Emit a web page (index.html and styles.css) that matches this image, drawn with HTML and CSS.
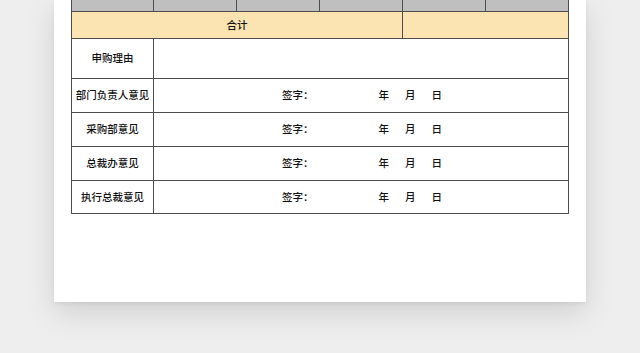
FILE: index.html
```html
<!DOCTYPE html>
<html lang="zh-CN">
<head>
  <meta charset="UTF-8" />
  <meta name="viewport" content="width=device-width, initial-scale=1" />
  <title>采购申请单</title>
  <link rel="stylesheet" href="styles.css">
</head>
<body>
  <div class="sheet">
    <table class="form">
      <colgroup>
        <col class="first"><col><col><col><col><col>
      </colgroup>
      <tr class="head-row">
        <td></td><td></td><td></td><td></td><td></td><td></td>
      </tr>
      <tr class="total-row">
        <td colspan="4">合计</td>
        <td colspan="2"></td>
      </tr>
      <tr class="reason-row">
        <td class="label">申购理由</td>
        <td colspan="5"></td>
      </tr>
      <tr class="sign-row">
        <td class="label">部门负责人意见</td>
        <td colspan="5" class="sign"><span class="sig">签字：</span><span class="y">年</span><span class="m">月</span><span class="d">日</span></td>
      </tr>
      <tr class="sign-row">
        <td class="label">采购部意见</td>
        <td colspan="5" class="sign"><span class="sig">签字：</span><span class="y">年</span><span class="m">月</span><span class="d">日</span></td>
      </tr>
      <tr class="sign-row">
        <td class="label">总裁办意见</td>
        <td colspan="5" class="sign"><span class="sig">签字：</span><span class="y">年</span><span class="m">月</span><span class="d">日</span></td>
      </tr>
      <tr class="sign-row last">
        <td class="label">执行总裁意见</td>
        <td colspan="5" class="sign"><span class="sig">签字：</span><span class="y">年</span><span class="m">月</span><span class="d">日</span></td>
      </tr>
    </table>
  </div>
</body>
</html>
```

FILE: styles.css
```css
html, body {
  margin: 0;
  height: 100%;
  overflow: hidden;
}
body {
  background: #eeeeee;
  font-family: "Noto Sans CJK SC", "Noto Sans", sans-serif;
  color: #111;
}
.sheet {
  width: 497px;
  margin-left: 54px;
  padding: 0 18px 88px 17px;
  background: #fff;
  box-shadow: 0 10px 28px rgba(0, 0, 0, 0.13), 0 2px 4px rgba(0, 0, 0, 0.06);
}
.form {
  width: 497px;
  border-collapse: collapse;
  table-layout: fixed;
  font-size: 10.5px;
  font-weight: 500;
}
.form col { width: 83px; }
.form col.first { width: 82px; }
.form td {
  border: 1px solid #4d4d4d;
  padding: 0;
  text-align: center;
  line-height: 1;
}
.head-row td {
  height: 11px;
  background: #bfbfbf;
  border-top: none;
}
.total-row td {
  height: 26px;
  background: #fbe4b1;
}
.reason-row td { height: 39px; }
.sign-row td { height: 33px; }
.sign-row.last td { height: 32px; }
.form td.sign {
  text-align: left;
  padding-left: 128px;
}
.sign span { display: inline-block; }
.sign .y { margin-left: 65px; }
.sign .m { margin-left: 16px; }
.sign .d { margin-left: 16px; }
```
